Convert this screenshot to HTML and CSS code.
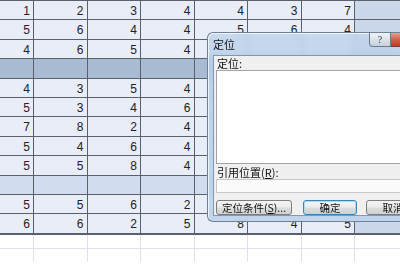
FILE: index.html
```html
<!DOCTYPE html>
<html lang="zh-CN">
<head>
<meta charset="utf-8">
<title>定位</title>
<link rel="stylesheet" href="styles.css">
</head>
<body>
<div class="sheet">
  <div class="grid">
    <div class="row"><div class="c">1</div><div class="c">2</div><div class="c">3</div><div class="c">4</div><div class="c">4</div><div class="c">3</div><div class="c">7</div><div class="c sel"></div></div>
    <div class="row"><div class="c">5</div><div class="c">6</div><div class="c">4</div><div class="c">4</div><div class="c">5</div><div class="c">6</div><div class="c">4</div><div class="c sel"></div></div>
    <div class="row"><div class="c">4</div><div class="c">6</div><div class="c">5</div><div class="c">4</div><div class="c"></div><div class="c"></div><div class="c"></div><div class="c sel"></div></div>
    <div class="row hl"><div class="c"></div><div class="c"></div><div class="c"></div><div class="c"></div><div class="c"></div><div class="c"></div><div class="c"></div><div class="c"></div></div>
    <div class="row"><div class="c">4</div><div class="c">3</div><div class="c">5</div><div class="c">4</div><div class="c"></div><div class="c"></div><div class="c"></div><div class="c sel"></div></div>
    <div class="row"><div class="c">5</div><div class="c">3</div><div class="c">4</div><div class="c">6</div><div class="c"></div><div class="c"></div><div class="c"></div><div class="c sel"></div></div>
    <div class="row"><div class="c">7</div><div class="c">8</div><div class="c">2</div><div class="c">4</div><div class="c"></div><div class="c"></div><div class="c"></div><div class="c sel"></div></div>
    <div class="row"><div class="c">5</div><div class="c">4</div><div class="c">6</div><div class="c">4</div><div class="c"></div><div class="c"></div><div class="c"></div><div class="c sel"></div></div>
    <div class="row"><div class="c">5</div><div class="c">5</div><div class="c">8</div><div class="c">4</div><div class="c"></div><div class="c"></div><div class="c"></div><div class="c sel"></div></div>
    <div class="row lt"><div class="c"></div><div class="c"></div><div class="c"></div><div class="c"></div><div class="c"></div><div class="c"></div><div class="c"></div><div class="c"></div></div>
    <div class="row"><div class="c">5</div><div class="c">5</div><div class="c">6</div><div class="c">2</div><div class="c"></div><div class="c"></div><div class="c"></div><div class="c sel"></div></div>
    <div class="row"><div class="c">6</div><div class="c">6</div><div class="c">2</div><div class="c">5</div><div class="c">8</div><div class="c">4</div><div class="c">5</div><div class="c sel"></div></div>
  </div>
  <div class="blank">
    <div class="brow"><div></div><div></div><div></div><div></div><div></div><div></div><div></div><div></div></div>
    <div class="brow"><div></div><div></div><div></div><div></div><div></div><div></div><div></div><div></div></div>
  </div>
</div>

<div class="dialog">
  <div class="titlebar">
    <span class="title">定位</span>
    <div class="caption-btns">
      <div class="help">?</div>
      <div class="close"></div>
    </div>
  </div>
  <div class="client">
    <div class="label">定位:</div>
    <div class="listbox"></div>
    <div class="label label2">引用位置(<u>R</u>):</div>
    <div class="input"></div>
    <div class="buttons">
      <div class="btn btn-special">定位条件(<u>S</u>)...</div>
      <div class="btn btn-ok">确定</div>
      <div class="btn btn-cancel">取消</div>
    </div>
  </div>
</div>
</body>
</html>
```

FILE: styles.css
```css
html, body {
  margin: 0;
  padding: 0;
  width: 400px;
  height: 266px;
  overflow: hidden;
  background: #ffffff;
  font-family: "Liberation Sans", "Noto Sans CJK SC", sans-serif;
}

.sheet {
  width: 400px;
}

.grid {
  display: flex;
  flex-direction: column;
  gap: 1px;
  padding-top: 1px;
  padding-bottom: 2px;
  background: #5b616b;
}

.row {
  display: grid;
  grid-template-columns: 33px repeat(6, 52.5px) 1fr;
  column-gap: 1px;
  height: 18.4px;
}

.c {
  background: #e8edf7;
  color: #222;
  font-size: 12px;
  line-height: 20px;
  text-align: right;
  padding-right: 3px;
  overflow: hidden;
}

.c.sel {
  background: #cbd7eb;
}

.row.hl .c {
  background: #a9bbd3;
}

.row.lt .c {
  background: #d1dcee;
}

.blank {
  display: flex;
  flex-direction: column;
  gap: 1px;
  background: #dde2ea;
}

.brow {
  display: grid;
  grid-template-columns: 33px repeat(6, 52.5px) 1fr;
  column-gap: 1px;
  height: 13px;
}

.brow div {
  background: #ffffff;
}

/* Dialog overlay (cut off by the right edge of the window) */
.dialog {
  position: absolute;
  left: 207px;
  top: 32px;
  width: 193px;
  height: 190px;
  box-sizing: border-box;
  border: 1px solid #6f8196;
  border-right: none;
  border-radius: 6px 0 0 6px;
  padding: 0 0 5px 5px;
  display: flex;
  flex-direction: column;
  overflow: hidden;
  background: linear-gradient(180deg, rgba(196, 216, 238, 0.78) 0%, rgba(182, 206, 233, 0.85) 14%, rgba(190, 212, 236, 0.9) 100%);
  backdrop-filter: blur(3px);
  box-shadow: inset 1px 1px 0 rgba(255,255,255,0.7);
}

.titlebar {
  height: 22px;
  flex: none;
  display: flex;
  align-items: flex-start;
  position: relative;
}

.title {
  font-family: "Noto Sans CJK SC", sans-serif;
  font-size: 11px;
  color: #111;
  margin-top: 4px;
  line-height: 14px;
}

.caption-btns {
  position: absolute;
  left: 156px;
  top: 0;
  display: flex;
}

.help {
  width: 22px;
  height: 14px;
  box-sizing: border-box;
  border: 1px solid #6b7a8c;
  border-top: none;
  border-radius: 0 0 0 4px;
  background: linear-gradient(180deg, #eef2f7 0%, #dbe3ec 50%, #c6d1de 100%);
  font-size: 10px;
  line-height: 13px;
  text-align: center;
  color: #333;
  font-family: "Liberation Serif", serif;
}

.close {
  width: 40px;
  height: 14px;
  box-sizing: border-box;
  border: 1px solid #6b4040;
  border-top: none;
  border-left: none;
  background: linear-gradient(180deg, #e8a090 0%, #d0604c 50%, #c03a28 100%);
}

.client {
  flex: 1;
  border: 1px solid #8797ab;
  border-right: none;
  background: #f0f0f0;
  padding: 0 0 0 2px;
  display: flex;
  flex-direction: column;
  overflow: hidden;
  font-family: "Noto Sans CJK SC", sans-serif;
  font-size: 11px;
  color: #111;
}

.label {
  height: 13px;
  line-height: 13px;
  margin-top: 1px;
  padding-left: 1px;
}

.listbox {
  height: 92px;
  background: #ffffff;
  border: 1px solid #9ea4ac;
  border-right: none;
}

.label2 {
  margin-top: 1px;
  height: 14px;
  line-height: 14px;
}

.input {
  height: 12px;
  background: #fbfbfb;
  border: 1px solid #c4c8cd;
  border-right: none;
}

.buttons {
  display: flex;
  margin-top: 7px;
  gap: 11px;
}

.btn {
  flex: none;
  height: 15px;
  box-sizing: border-box;
  border: 1px solid #7d7d7d;
  border-radius: 3px;
  background: linear-gradient(180deg, #f4f4f4 0%, #ececec 45%, #dcdcdc 55%, #d2d2d2 100%);
  font-size: 10.5px;
  line-height: 13px;
  text-align: center;
  color: #111;
  white-space: nowrap;
}

.btn-special {
  width: 76px;
}

.btn-ok {
  width: 54px;
  border-color: #3c82b5;
  box-shadow: inset 0 0 0 1px #a8dcf5;
}

.btn-cancel {
  width: 54px;
  margin-left: -2px;
}
```
